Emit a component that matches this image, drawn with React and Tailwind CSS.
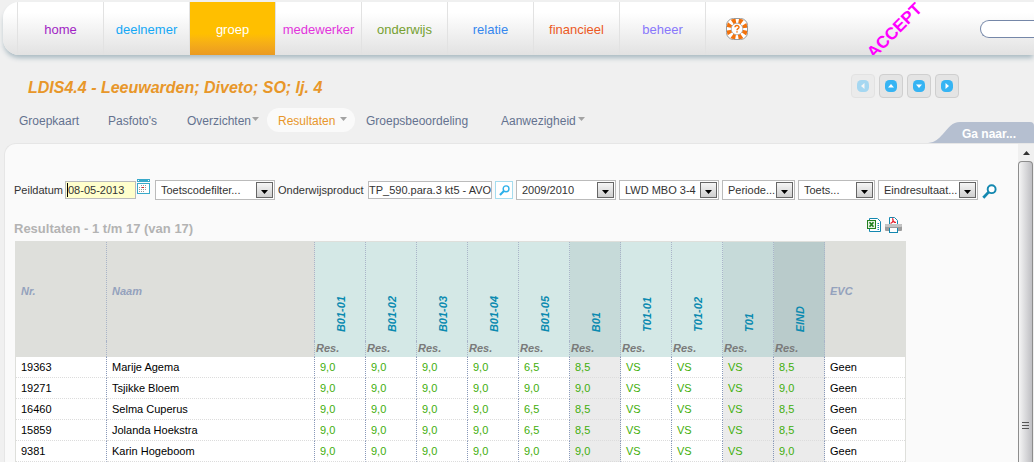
import React from "react";

const menu = [
  { label: "home", color: "text-[#a11fc4]" },
  { label: "deelnemer", color: "text-[#14a8f5]" },
  { label: "groep", color: "text-white", active: true },
  { label: "medewerker", color: "text-[#e234dc]" },
  { label: "onderwijs", color: "text-[#76a030]" },
  { label: "relatie", color: "text-[#3587ee]" },
  { label: "financieel", color: "text-[#ec5a24]" },
  { label: "beheer", color: "text-[#8877fb]" },
];

const tabs = [
  { label: "Groepkaart", width: "w-[89px]" },
  { label: "Pasfoto's", width: "w-[79px]" },
  { label: "Overzichten", width: "w-[91px]", arrow: true },
  { label: "Resultaten", width: "w-[88px]", arrow: true, active: true },
  { label: "Groepsbeoordeling", width: "w-[135px]" },
  { label: "Aanwezigheid", width: "w-[103px]", arrow: true },
];

const pagers = [
  { label: "Vorige", path: "M7.500 3 L4 6 L7.500 9 Z", disabled: true },
  { label: "Omhoog", path: "M3 7.500 L6 4 L9 7.500 Z" },
  { label: "Omlaag", path: "M3 4.500 L6 8 L9 4.500 Z" },
  { label: "Volgende", path: "M4.500 3 L8 6 L4.500 9 Z" },
];

const LIGHT = "bg-[#d4e8e6]";
const MID = "bg-[#c6dad9]";
const DARK = "bg-[#b9cbcb]";

const columns = [
  { label: "B01-01", head: LIGHT, body: "" },
  { label: "B01-02", head: LIGHT, body: "" },
  { label: "B01-03", head: LIGHT, body: "" },
  { label: "B01-04", head: LIGHT, body: "" },
  { label: "B01-05", head: LIGHT, body: "" },
  { label: "B01", head: MID, body: "bg-[#ebebeb]" },
  { label: "T01-01", head: LIGHT, body: "" },
  { label: "T01-02", head: LIGHT, body: "" },
  { label: "T01", head: MID, body: "bg-[#ebebeb]" },
  { label: "EIND", head: DARK, body: "bg-[#ebebeb]" },
];

const low = ["9,0", "9,0", "9,0", "9,0", "6,5", "8,5", "VS", "VS", "VS", "8,5"];
const high = ["9,0", "9,0", "9,0", "9,0", "9,0", "9,0", "VS", "VS", "VS", "9,0"];

const rows = [
  { nr: "19363", naam: "Marije Agema", res: low },
  { nr: "19271", naam: "Tsjikke Bloem", res: high },
  { nr: "16460", naam: "Selma Cuperus", res: low },
  { nr: "15859", naam: "Jolanda Hoekstra", res: low },
  { nr: "9381", naam: "Karin Hogeboom", res: high },
];

function HelpIcon() {
  return (
    <svg width="22" height="22" viewBox="0 0 22 22" aria-hidden="true">
      <defs>
        <clipPath id="buoy">
          <rect x="1" y="1" width="20" height="20" rx="6.500" />
        </clipPath>
      </defs>
      <rect x="0.5" y="0.5" width="21" height="21" rx="7" fill="#fff" stroke="#999" />
      <circle cx="11" cy="11" r="8.2" fill="none" stroke="#f2720c" strokeWidth="6" strokeDasharray="3.6 2.84" strokeDashoffset="-1.42" clipPath="url(#buoy)" />
      <circle cx="11" cy="11" r="5.8" fill="#fff" stroke="#aaa" strokeWidth="0.8" />
      <path d="M9 9.3 C9 7 13 7 13 9.2 C13 10.700 11 10.600 11 12.200" fill="none" stroke="#f2720c" strokeWidth="1.4" />
      <rect x="10.3" y="13.2" width="1.4" height="1.4" fill="#f2720c" />
    </svg>
  );
}

function CalendarIcon() {
  return (
    <svg width="13" height="15" viewBox="0 0 13 15" shapeRendering="crispEdges" aria-hidden="true">
      <rect width="13" height="3" fill="#39a9c9" />
      <rect x="1" y="1" width="1" height="1" fill="#fff" />
      <rect x="11" y="1" width="1" height="1" fill="#fff" />
      <rect x="0" y="4" width="13" height="11" fill="#39a9c9" />
      <rect x="1" y="5" width="11" height="9" fill="#fff" />
      <path d="M4 6.500h6M2 8.500h8M2 10.500h8M2 12.500h5" stroke="#999" strokeDasharray="1 1" />
      <rect x="5" y="8" width="2" height="1" fill="#d22" />
    </svg>
  );
}

function SearchIcon({ size, color }) {
  return (
    <svg width={size} height={size} viewBox="0 0 14 14" aria-hidden="true">
      <circle cx="9" cy="4.8" r="3.7" fill="#fff" stroke={color} strokeWidth="1.8" />
      <path d="M6.2 7.6 L1.2 12.8" stroke={color} strokeWidth="2.6" />
    </svg>
  );
}

function ExcelIcon() {
  return (
    <svg width="14" height="14" viewBox="0 0 14 14" aria-hidden="true">
      <path d="M2.500 3V.5h8l3 3v10h-11V11" fill="#fff" stroke="#1488b0" />
      <path d="M10.500 5.500h1.500M10.500 7.500h1.500M10.500 9.500h1.500M10.500 11.500h1.500" stroke="#1488b0" />
      <rect x="0.5" y="2.5" width="8" height="8" fill="#e6f1e4" stroke="#23801f" />
      <path d="M2.5 4.3 L6.5 8.8 M6.5 4.3 L2.5 8.8" stroke="#23801f" strokeWidth="1.7" />
    </svg>
  );
}

function PdfPrintIcon() {
  return (
    <svg width="17" height="16" viewBox="0 0 17 16" aria-hidden="true">
      <path d="M4.500 8V.5h5l3 3V8" fill="#fff" stroke="#1488b0" />
      <path d="M5.500 6.500 C7.500 5.500 8.500 3.500 7.800 2 C7.500 4 9 5.500 11 5.500" fill="none" stroke="#e8222e" strokeWidth="1.2" />
      <rect x="0" y="7" width="17" height="7" rx="1" fill="#9c9c9c" />
      <rect x="0" y="7" width="17" height="3" rx="1" fill="#c4c4c4" />
      <rect x="4" y="11" width="9" height="5" fill="#1488b0" />
      <rect x="5" y="11" width="7" height="4" fill="#fff" />
    </svg>
  );
}

function FilterSelect({ label, value, width }) {
  return (
    <div className={"relative h-5 shrink-0 " + width}>
      <select
        aria-label={label}
        defaultValue={value}
        className="h-5 w-full appearance-none rounded-none border border-[#bbb] bg-white pl-[5px] text-[11px] leading-[18px] text-[#333] outline-none"
      >
        <option>{value}</option>
      </select>
      <span className="pointer-events-none absolute right-[2px] top-[2px] flex h-4 w-[17px] items-center justify-center border border-[#666] bg-linear-to-b from-[#f6f6f6] to-[#cfcfcf]">
        <svg width="7" height="4" viewBox="0 0 7 4" className="mt-[3px]" aria-hidden="true">
          <path d="M0 0h7L3.500 4z" fill="#000" />
        </svg>
      </span>
    </div>
  );
}

export default function App() {
  return (
    <div className="flex h-screen flex-col overflow-hidden bg-[#f0f0f0] pt-[2px] font-['Liberation_Sans',Arial,sans-serif]">
      <header className="ml-[3px] flex h-[53px] shrink-0 overflow-hidden rounded-l-2xl bg-linear-to-b from-white from-20% to-[#e2e2e2] pl-[14px] shadow-[0_4px_5px_-1px_#a9bac2]">
        <nav className="flex">
          {menu.map((m) => (
            <a
              key={m.label}
              href="#"
              className={
                "flex w-[86px] items-center justify-center border-l border-[#e2e2e2] pt-[2px] text-[13px] leading-4 " +
                m.color +
                (m.active ? " bg-linear-to-b from-[#ffbf00] from-60% to-[#ea9a22]" : "")
              }
            >
              {m.label}
            </a>
          ))}
        </nav>
        <button type="button" aria-label="Help" className="flex items-center border-l border-[#e2e2e2] pl-[20px]">
          <HelpIcon />
        </button>
        <div className="ml-auto flex items-center">
          <span className="mr-[50px] mt-1 -rotate-45 text-[17px] font-bold leading-5 text-[#ff00ff]">ACCEPT</span>
          <input aria-label="Zoeken" className="h-[18px] w-[54px] rounded-l-full border border-r-0 border-[#7587a8] bg-white outline-none" />
        </div>
      </header>

      <div className="mt-[19px] flex h-6 shrink-0 items-center justify-between pl-[28px] pr-[75px]">
        <h1 className="pt-[4px] text-base font-bold italic leading-5 text-[#e8972a]">LDIS4.4 - Leeuwarden; Diveto; SO; lj. 4</h1>
        <div className="flex gap-1">
          {pagers.map((p) => (
            <button
              key={p.label}
              type="button"
              aria-label={p.label}
              disabled={p.disabled}
              className={
                "flex size-6 items-center justify-center rounded-sm border border-[#cfcfcf] bg-[#e4e4e4]" +
                (p.disabled ? " opacity-40" : "")
              }
            >
              <svg width="12" height="12" viewBox="0 0 12 12" aria-hidden="true">
                <rect width="12" height="12" rx="4.500" fill="#36b4f3" />
                <path d={p.path} fill="#fff" />
              </svg>
            </button>
          ))}
        </div>
      </div>

      <div className="mt-[10px] flex h-[35px] shrink-0 justify-between pl-2">
        <nav className="flex h-6">
          {tabs.map((t) => (
            <a
              key={t.label}
              href="#"
              className={
                "flex h-6 items-center justify-between rounded-xl pl-[11px] pr-2 pt-[2px] text-xs leading-4 " +
                t.width +
                (t.active ? " bg-[#fafafa] text-[#e8972a]" : " text-[#64728f]")
              }
            >
              {t.label}
              {t.arrow && (
                <svg className="mb-1" width="7" height="4" viewBox="0 0 7 4" aria-hidden="true">
                  <path d="M0 0h7L3.500 4z" fill="#a3a3a3" />
                </svg>
              )}
            </a>
          ))}
        </nav>
        <a href="#" className="relative flex h-[21px] w-[106px] items-center self-end pl-[34px] pt-[2px] text-xs font-bold leading-4 text-white">
          <svg className="absolute inset-0" width="106" height="21" viewBox="0 0 106 21" aria-hidden="true">
            <path d="M0 21 C8 20 10 17 15 12 C21 5 24 0 32 0 H102 Q106 0 106 4 V21 Z" fill="#b5bfd0" />
          </svg>
          <span className="relative">Ga naar...</span>
        </a>
      </div>

      <main className="ml-1 flex min-h-0 flex-1 overflow-hidden rounded-tl-xl border-l border-t border-[#e6e6e6] bg-[#fafafa]">
        <div className="min-w-0 flex-1 overflow-hidden pl-[9px] pt-[35px]">
          <form className="flex h-[22px] items-center gap-[3px] text-[11px] leading-4 text-[#333]">
            <label htmlFor="peildatum" className="w-[48px] shrink-0 whitespace-nowrap">Peildatum</label>
            <div className="relative flex shrink-0">
              <input
                id="peildatum"
                defaultValue="08-05-2013"
                className="h-[18px] w-[71px] border border-[#bbb] bg-[#ffffcc] pl-[2px] text-[11px] text-[#333] outline-none"
              />
              <span className="absolute left-[2px] top-[2px] h-[14px] w-px bg-black" />
            </div>
            <button type="button" aria-label="Kalender" className="-ml-[2px] mr-[2px] shrink-0 self-start">
              <CalendarIcon />
            </button>
            <FilterSelect label="Toetscodefilter" value="Toetscodefilter..." width="w-[120px]" />
            <label htmlFor="product" className="w-[87px] shrink-0 whitespace-nowrap">Onderwijsproduct</label>
            <input
              id="product"
              defaultValue="TP_590.para.3 kt5 - AVO"
              className="h-[18px] w-[124px] shrink-0 border border-[#bbb] bg-white text-[11px] text-[#333] outline-none"
            />
            <button type="button" aria-label="Zoek product" className="flex size-[18px] shrink-0 items-center justify-center border border-[#a5dcee] bg-white">
              <SearchIcon size={11} color="#2ab0ea" />
            </button>
            <FilterSelect label="Schooljaar" value="2009/2010" width="w-[100px]" />
            <FilterSelect label="Opleiding" value="LWD MBO 3-4" width="w-[100px]" />
            <FilterSelect label="Periode" value="Periode..." width="w-[73px]" />
            <FilterSelect label="Toets" value="Toets..." width="w-[77px]" />
            <FilterSelect label="Eindresultaat" value="Eindresultaat..." width="w-[100px]" />
            <button type="submit" aria-label="Zoeken" className="ml-px mt-[2px] shrink-0">
              <SearchIcon size={15} color="#1488b0" />
            </button>
          </form>

          <div className="mt-4 flex h-[24px] w-[891px] justify-between pr-[3px]">
            <h2 className="pt-[2px] text-[13px] font-bold leading-5 text-[#b3b3b3]">Resultaten - 1 t/m 17 (van 17)</h2>
            <div className="flex items-start gap-1">
              <button type="button" aria-label="Excel" className="mt-[1px]">
                <ExcelIcon />
              </button>
              <button type="button" aria-label="PDF afdrukken">
                <PdfPrintIcon />
              </button>
            </div>
          </div>

          <table className="ml-px w-[891px] table-fixed border-separate border-spacing-0 border border-b-0 border-[#dedfdb] text-left text-[11px] leading-4">
            <colgroup>
              <col className="w-[91px]" />
              <col className="w-[208px]" />
              {columns.map((c) => (
                <col key={c.label} className="w-[51px]" />
              ))}
              <col />
            </colgroup>
            <thead className="italic">
              <tr className="h-[99px] bg-[#dedfdb] text-[#94a2bd]">
                <th className="border-r border-dotted border-[#a9b4c8] p-0 pb-[2px] pl-[5px]">Nr.</th>
                <th className="border-r border-dotted border-[#a9b4c8] p-0 pb-[2px] pl-[5px]">Naam</th>
                {columns.map((c) => (
                  <th key={c.label} className={"border-r border-dotted border-[#a9b4c8] p-0 pb-[9px] pl-[18px] align-bottom text-[#0a8ab0] " + c.head}>
                    <span className="inline-block rotate-180 align-bottom [writing-mode:vertical-rl]">{c.label}</span>
                  </th>
                ))}
                <th className="p-0 pb-[2px] pl-[5px]">EVC</th>
              </tr>
              <tr className="h-4 bg-[#dedfdb] text-[#7a7a7a]">
                <td className="border-r border-dotted border-[#a9b4c8] p-0" />
                <td className="border-r border-dotted border-[#a9b4c8] p-0" />
                {columns.map((c) => (
                  <th key={c.label} className={"border-r border-dotted border-[#a9b4c8] p-0 pl-px leading-[14px] align-top " + c.head}>Res.</th>
                ))}
                <td className="p-0" />
              </tr>
            </thead>
            <tbody className="bg-white text-black">
              {rows.map((r) => (
                <tr key={r.nr} className="h-[21px]">
                  <td className="border-b border-r border-dotted border-b-[#dcdcdc] border-r-[#8797b8] p-0 pl-[5px]">{r.nr}</td>
                  <td className="border-b border-r border-dotted border-b-[#dcdcdc] border-r-[#8797b8] p-0 pl-[5px]">{r.naam}</td>
                  {r.res.map((v, i) => (
                    <td
                      key={columns[i].label}
                      className={"border-b border-r border-dotted border-b-[#dcdcdc] border-r-[#8797b8] p-0 pl-[5px] text-[#3fae0a] " + columns[i].body}
                    >
                      {v}
                    </td>
                  ))}
                  <td className="border-b border-dotted border-b-[#dcdcdc] p-0 pl-[5px]">Geen</td>
                </tr>
              ))}
            </tbody>
          </table>
        </div>

        <div className="flex w-4 shrink-0 flex-col bg-[#f0f0f0]" aria-hidden="true">
          <div className="flex h-[17px] items-center justify-center">
            <svg width="7" height="4" viewBox="0 0 7 4">
              <path d="M0 4h7L3.500 0z" fill="#333" />
            </svg>
          </div>
          <div className="mr-px flex flex-1 items-end justify-center rounded-t-sm border border-b-0 border-[#8d8d8d] bg-linear-to-r from-[#f5f5f5] to-[#bfbfc3] pb-8">
            <svg width="7" height="9" viewBox="0 0 7 9">
              <path d="M0 1.500h7M0 4.500h7M0 7.500h7" stroke="#555" />
            </svg>
          </div>
        </div>
      </main>
    </div>
  );
}
